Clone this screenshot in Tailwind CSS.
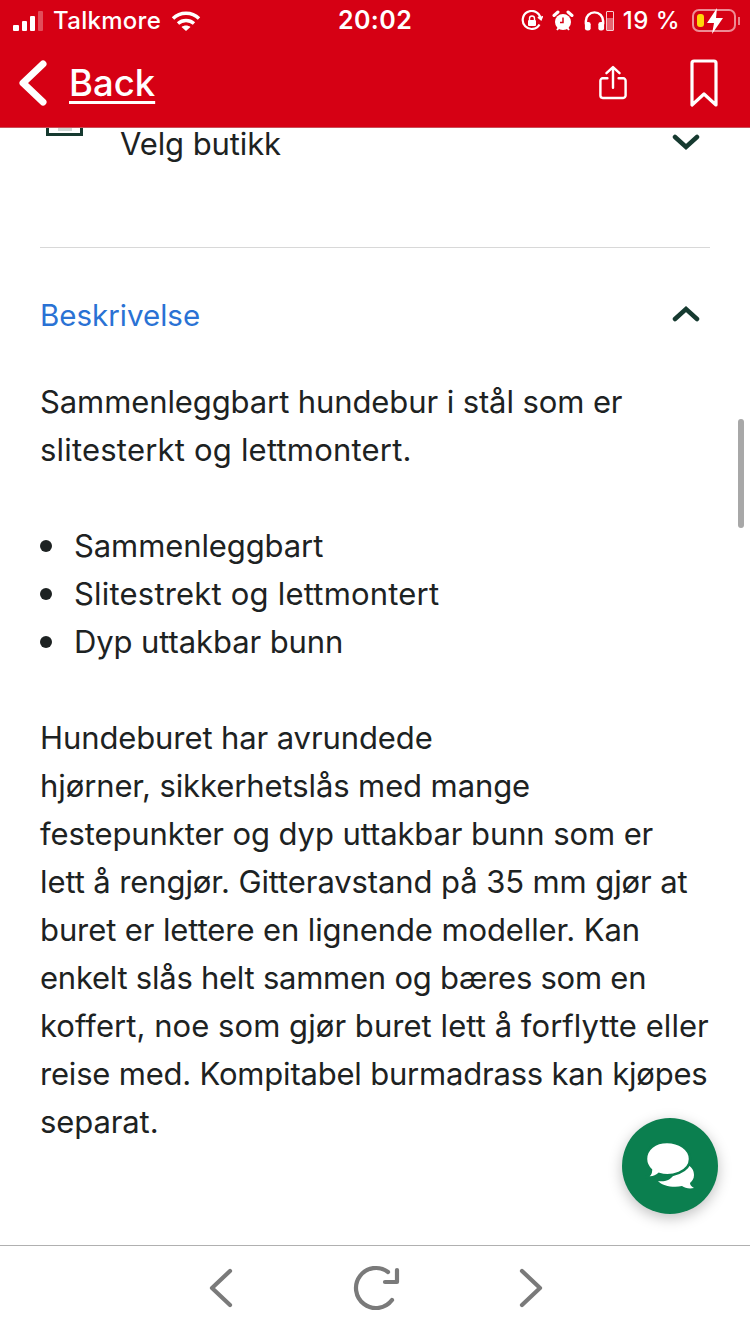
<!DOCTYPE html>
<html><head><meta charset="utf-8"><script src="https://cdn.jsdelivr.net/npm/@tailwindcss/browser@4"></script></head>
<body class="m-0">
<div class="relative w-[750px] h-[1334px] overflow-hidden bg-white flex flex-col font-['Inter','Liberation_Sans',sans-serif] text-[#1d2222]">
  <header class="h-[128px] shrink-0 bg-[#d60014] text-white flex flex-col border-b border-[#c9505a]">
    <div class="h-[41px] relative flex items-center justify-between pl-[13px] pr-[10px]">
      <div class="flex items-center gap-[10px]">
        <div class="flex items-end gap-[3px] h-[20px]">
          <div class="w-[6px] h-[6px] bg-white rounded-[1px]"></div>
          <div class="w-[5px] h-[10px] bg-white rounded-[1px]"></div>
          <div class="w-[5px] h-[15px] bg-white rounded-[1px]"></div>
          <div class="w-[5px] h-[20px] bg-white/30 rounded-[1px]"></div>
        </div>
        <span class="text-[24px] leading-none font-medium tracking-[0.3px]">Talkmore</span>
        <svg width="30" height="22" viewBox="0 0 30 22" fill="none" stroke="white" stroke-width="3.4"><path d="M2 8.500c7-7 19-7 26 0"/><path d="M7 13.500c4.500-4 11.500-4 16 0"/><path d="M15 21l-4.500-4c2.500-2 6.500-2 9 0z" fill="white" stroke="none"/></svg>
      </div>
      <span class="absolute left-[338px] top-[8px] text-[25px] leading-[24px] font-semibold tracking-[0.4px]">20:02</span>
      <div class="flex items-center">
        <svg width="22" height="22" viewBox="0 0 22 22" fill="none" stroke="white" stroke-width="2.200" class="mr-[9px]"><path d="M18.500 14.500A9 9 0 1 1 19.500 8"/><path d="M17 7l3 2.500 1.500-3.500" stroke-width="1.800"/><rect x="7" y="10" width="8" height="6" rx="1" fill="white" stroke="none"/><path d="M8.500 10V8.500a2.500 2.500 0 0 1 5 0V10" stroke-width="1.400"/></svg>
        <svg width="22" height="22" viewBox="0 0 22 22" class="mr-[9px]"><circle cx="11" cy="12" r="8" fill="white"/><path d="M11 7.500V12.500H8" stroke="#d60014" stroke-width="1.500" fill="none"/><path d="M2 5.500L6 2M20 5.500L16 2" stroke="white" stroke-width="3" stroke-linecap="round"/><path d="M5 20l2-2.500M17 20l-2-2.500" stroke="white" stroke-width="2"/></svg>
        <svg width="23" height="22" viewBox="0 0 24 22" fill="none"><path d="M3 14v-3a9 9 0 0 1 18 0v3" stroke="white" stroke-width="2.600"/><rect x="2" y="12" width="6" height="9" rx="2.500" fill="white"/><rect x="16" y="12" width="6" height="9" rx="2.500" fill="white"/></svg>
        <div class="w-[8px] h-[20px] border border-white/80 rounded-[1px] flex items-end mr-[9px]"><div class="w-full h-[12px] bg-white/40"></div></div>
        <span class="text-[24px] leading-none font-medium mr-[12px] tracking-[0.5px]">19 %</span>
        <div class="relative w-[44px] h-[23px] border-2 border-white/55 rounded-[7px] p-[3px] flex">
          <div class="w-[7px] h-full rounded-[3px] bg-[#ffd60a]"></div>
          <svg class="absolute left-[11px] top-[-4px]" width="20" height="28" viewBox="0 0 20 28"><path d="M12 1L2 16h7l-2 11 11-16h-7z" fill="white"/></svg>
        </div>
        <div class="w-[2px] h-[8px] bg-white/50 ml-[2px]"></div>
      </div>
    </div>
    <div class="flex-1 flex items-center justify-between pl-[19px] pr-[31px] pb-[2px]">
      <div class="flex items-center gap-[22px]">
        <svg width="28" height="46" viewBox="0 0 28 46" fill="none" stroke="white" stroke-width="7" stroke-linecap="round" stroke-linejoin="round"><path d="M24 4L4 23l20 19"/></svg>
        <span class="text-[36.500px] leading-[42px] font-medium underline underline-offset-[5px] decoration-[3px]">Back</span>
      </div>
      <div class="flex items-center gap-[62px]">
        <svg width="28" height="36" viewBox="0 0 30 38" fill="none" stroke="white" stroke-width="2.600" stroke-linecap="round" stroke-linejoin="round"><path d="M9 14H4a2.500 2.500 0 0 0-2.500 2.500v16A2.500 2.500 0 0 0 4 35h22a2.500 2.500 0 0 0 2.500-2.500v-16A2.500 2.500 0 0 0 26 14h-5"/><path d="M15 24V2M8 8.500L15 2l7 6.500"/></svg>
        <svg width="30" height="48" viewBox="0 0 30 48" fill="none" stroke="white" stroke-width="3.200" stroke-linejoin="round"><path d="M3 46V4a2 2 0 0 1 2-2h20a2 2 0 0 1 2 2v42L15 35z"/></svg>
      </div>
    </div>
  </header>
  <main class="flex-1 px-[40px] overflow-hidden relative">
    <div class="h-[120px] border-b border-[#d8d8d8] flex items-start justify-between pr-[10px]">
      <div class="flex items-start">
        <div class="w-[37px] h-[8px] ml-[6px] border-[3px] border-t-0 border-[#163a30] flex justify-center"><div class="w-[14px] h-[3px] bg-[#163a30]/20"></div></div>
        <span class="ml-[37px] text-[31px] leading-[32px] tracking-[-0.1px]">Velg butikk</span>
      </div>
      <svg class="mt-[6px]" width="28" height="17" viewBox="0 0 28 17" fill="none" stroke="#163a30" stroke-width="4.500" stroke-linecap="round"><path d="M3 3l11 10L25 3"/></svg>
    </div>
    <div class="flex items-center justify-between pr-[10px] h-[134px]">
      <h2 class="text-[29.500px] leading-[48px] text-[#2a72d4] font-normal">Beskrivelse</h2>
      <svg class="mb-[3px]" width="28" height="17" viewBox="0 0 28 17" fill="none" stroke="#163a30" stroke-width="4.500" stroke-linecap="round"><path d="M3 14L14 4l11 10"/></svg>
    </div>
    <div class="text-[31px] leading-[48px] tracking-[-0.1px] -mt-[4px] whitespace-nowrap">
      <p>Sammenleggbart hundebur i stål som er<br><span class="tracking-[0.2px]">slitesterkt og lettmontert.</span></p>
      <ul class="mt-[48px] list-none">
        <li class="flex items-center gap-[22px]"><span class="w-[12px] h-[12px] rounded-full bg-[#1d2222]"></span>Sammenleggbart</li>
        <li class="flex items-center gap-[22px]"><span class="w-[12px] h-[12px] rounded-full bg-[#1d2222]"></span><span class="tracking-[0.2px]">Slitestrekt og lettmontert</span></li>
        <li class="flex items-center gap-[22px]"><span class="w-[12px] h-[12px] rounded-full bg-[#1d2222]"></span>Dyp uttakbar bunn</li>
      </ul>
      <p class="mt-[48px]">Hundeburet har avrundede<br>hjørner, sikkerhetslås med mange<br>festepunkter og dyp uttakbar bunn som er<br>lett å rengjør. Gitteravstand på 35 mm gjør at<br>buret er lettere en lignende modeller. Kan<br><span class="tracking-[-0.25px]">enkelt slås helt sammen og bæres som en</span><br><span class="tracking-[0.05px]">koffert, noe som gjør buret lett å forflytte eller</span><br><span class="tracking-[-0.2px]">reise med. Kompitabel burmadrass kan kjøpes</span><br>separat.</p>
    </div>
    <div class="absolute right-[6px] top-[291px] w-[6px] h-[109px] rounded-full bg-[#a8a8a8]"></div>
    <button class="absolute right-[32px] top-[990px] w-[96px] h-[96px] rounded-full bg-[#0b7f4f] shadow-[0_4px_14px_rgba(0,0,0,0.25)] flex items-center justify-center">
      <svg width="50" height="50" viewBox="0 0 50 50"><path d="M30 22c8 0 20 1 20 12 0 4-2 6-4 8 0 2 1 3 4 5-5 1-9 0-12-2-8 2-20 0-24-5 12 2 20-6 16-18z" fill="white" transform="translate(-1 0)"/><path d="M22 1C10 1 1 8 1 18c0 5 2 8 5 11 0 3-2 6-5 7 5 1 10 0 13-3 12 4 31-2 31-15C45 8 34 1 22 1z" fill="white" stroke="#0b7f4f" stroke-width="2.500"/></svg>
    </button>
  </main>
  <nav class="h-[89px] shrink-0 border-t border-[#b0b0b0] bg-white flex items-center justify-center gap-[119px] pb-[4px] pl-[1px]">
    <svg width="24" height="40" viewBox="0 0 24 40" fill="none" stroke="#7a7a7a" stroke-width="4.200" stroke-linecap="round" stroke-linejoin="round"><path d="M21 3L3 20l18 17"/></svg>
    <svg width="48" height="46" viewBox="0 0 48 46" fill="none" stroke="#7a7a7a" stroke-width="4.200" stroke-linecap="round" stroke-linejoin="round"><path d="M40 35A20 20 0 1 1 36 7"/><path d="M45 5v12H33"/></svg>
    <svg width="24" height="40" viewBox="0 0 24 40" fill="none" stroke="#7a7a7a" stroke-width="4.200" stroke-linecap="round" stroke-linejoin="round"><path d="M3 3l18 17L3 37"/></svg>
  </nav>
</div>
</body></html>
